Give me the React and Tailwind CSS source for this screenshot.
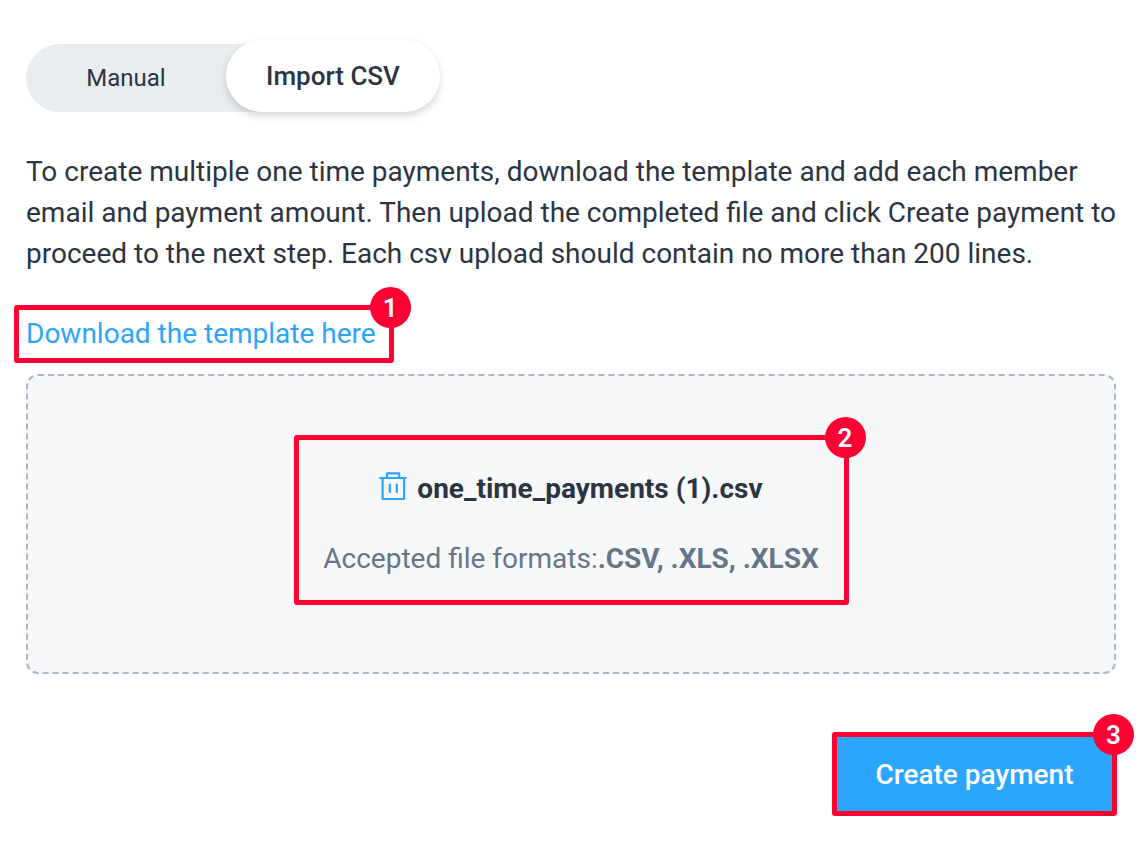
function Marker({ n }) {
  return (
    <span className="absolute -top-[23px] -right-[22px] flex size-[41px] items-center justify-center rounded-full bg-[#ff0032] text-[26px] font-semibold leading-none text-white">
      {n}
    </span>
  );
}

function TrashIcon() {
  return (
    <svg viewBox="0 0 28 30" className="h-[30px] w-7" fill="none" stroke="#2ca5ff" strokeWidth="2.2" strokeLinecap="round" strokeLinejoin="round" aria-hidden="true">
      <path d="M1.200 7H26.800M3.600 7v21h21.500V7M8 7V2.300h12.200V7M10.800 13.500v7.500M17.800 13.500v7.500" />
    </svg>
  );
}

export default function App() {
  return (
    <main className="pl-[26px] pr-7 pt-10 pb-9 font-[Roboto,sans-serif] text-[28px] leading-[41px] text-[#2b3442]">
      <div className="flex items-end" role="tablist" aria-label="Payment entry mode">
        <button type="button" role="tab" aria-selected="false" className="-mr-9 h-[68px] w-[236px] rounded-l-full bg-[#e9edf0] pr-9 text-[24px]">
          Manual
        </button>
        <button type="button" role="tab" aria-selected="true" className="relative h-[72px] w-[214px] rounded-full bg-white text-[26px] font-medium shadow-[0_4px_8px_rgba(0,0,0,0.16)]">
          Import CSV
        </button>
      </div>

      <p className="-mr-2 mt-[39px]">
        To create multiple one time payments, download the template and add each member email and payment amount. Then upload the completed file and click Create payment to proceed to the next step. Each csv upload should contain no more than 200 lines.
      </p>

      <div className="relative -ml-3 mt-[31px] w-fit rounded-[3px] border-[5px] border-[#ff0032] py-[3px] pr-[13px] pl-[7px]">
        <a href="#template" className="block leading-[42px] text-[#2ca5ff]">Download the template here</a>
        <Marker n={1} />
      </div>

      <section className="mt-[11px] flex h-[300px] items-center justify-center rounded-xl border-2 border-dashed border-[#a9b7cb] bg-[#f7f8fa]">
        <div className="relative -mt-2 flex h-[170px] w-[555px] flex-col items-center justify-center gap-[29px] rounded-[3px] border-[5px] border-[#ff0032] pt-1.5">
          <div className="flex items-center gap-[10px] font-bold">
            <button type="button" aria-label="Remove file" className="pb-1"><TrashIcon /></button>
            <span>one_time_payments (1).csv</span>
          </div>
          <p className="text-[#65758a]">Accepted file formats:<strong>.CSV, .XLS, .XLSX</strong></p>
          <Marker n={2} />
        </div>
      </section>

      <div className="mt-[58px] -mr-px flex justify-end">
        <div className="relative rounded-[3px] border-[5px] border-[#ff0032] bg-[#2ca5ff]">
          <button type="button" className="block h-[74px] w-[275px] font-medium text-white">Create payment</button>
          <Marker n={3} />
        </div>
      </div>
    </main>
  );
}
